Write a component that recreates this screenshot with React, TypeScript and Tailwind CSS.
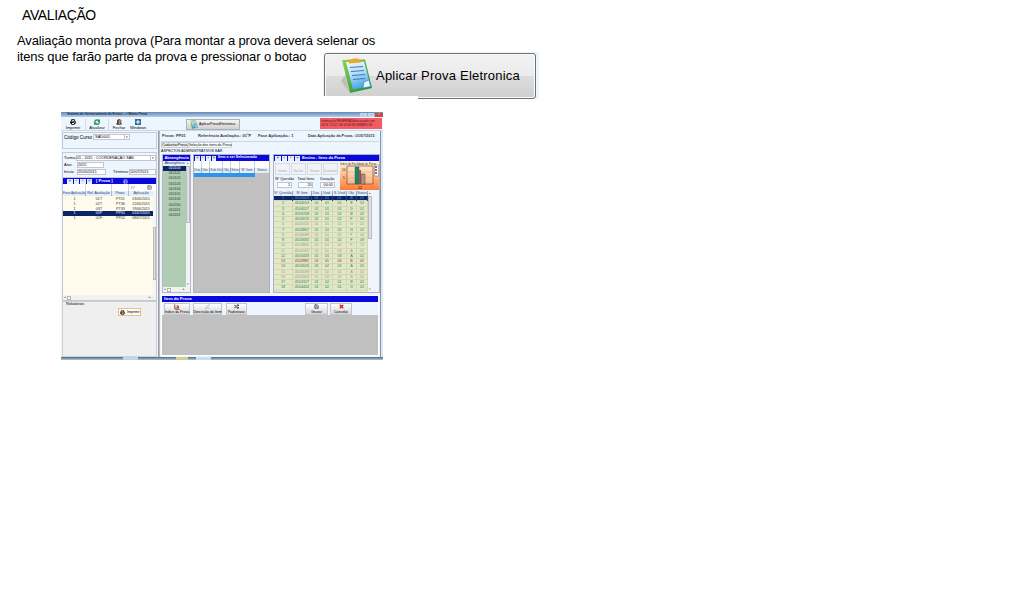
import React from "react";
import { Printer, RefreshCw, DoorOpen, CalendarDays, Plus, X, Save, BarChart3, PenLine, Shuffle } from "lucide-react";

function Clipboard({ className }: { className: string }) {
  return (
    <svg className={className} viewBox="0 0 32 36" fill="none">
      <defs>
        <linearGradient id="page" x1="0" y1="0" x2="0.3" y2="1">
          <stop offset="0" stopColor="#f4fcff" />
          <stop offset="0.5" stopColor="#b4dffa" />
          <stop offset="1" stopColor="#4da6e8" />
        </linearGradient>
        <linearGradient id="board" x1="0" y1="0" x2="1" y2="1">
          <stop offset="0" stopColor="#8fd34d" />
          <stop offset="1" stopColor="#178a3c" />
        </linearGradient>
      </defs>
      <path d="M0 23 4 17 8 34Z" fill="#9ba69c" opacity=".5" />
      <path d="M1 2 24 1.500 31 30 9 35Z" fill="url(#board)" />
      <path d="M5 4 23 3.500 29.500 28 12 31.500Z" fill="url(#page)" />
      <path d="m9 9.500 13-1M10 13.500l13-1M11 17.500l13-1M12 21.500l12-1" stroke="#3f78bd" strokeWidth="1.200" />
      <path d="m22 30 1-6 5-2 1.500 6.500Z" fill="#eefaff" stroke="#358bd2" strokeWidth=".7" />
      <path d="M7 1.500h4l1-1h5l1 1h2v3L8 5.500Z" fill="#e3ab2d" />
    </svg>
  );
}

function NavButtons({ size }: { size: string }) {
  return (
    <div className="flex shrink-0 gap-[1px]">
      {["«", "‹", "›", "»"].map((s) => (
        <span key={s} className={"flex h-[5px] items-center justify-center bg-[#e8edfa] text-[4px] leading-none text-[#34406b] " + size}>{s}</span>
      ))}
    </div>
  );
}

function VScroll({ thumb }: { thumb: string }) {
  return (
    <div className="flex w-[4px] shrink-0 flex-col items-center justify-between bg-[#f3f3f5] text-[3px] leading-[5px] text-[#555]">
      <span>▴</span>
      <div className={"w-[4px] border border-[#bbbcc2] bg-[#dfe0e4] " + thumb} />
      <div className="flex-1" />
      <span>▾</span>
    </div>
  );
}

function HScroll() {
  return (
    <div className="flex h-[5px] shrink-0 items-center bg-[#f1f1f1] px-[1px] text-[3px] leading-none text-[#444]">
      <span>◂</span>
      <div className="ml-[1px] h-[4px] w-[4px] border border-[#b5b5b5] bg-white" />
      <div className="flex-1" />
      <span className="mr-[4px]">▸</span>
    </div>
  );
}

const exams = [
  ["1", "01T", "PT01", "03/06/2015"],
  ["1", "02T", "PT36", "12/06/2015"],
  ["1", "03T", "PT33", "19/06/2015"],
  ["1", "01P", "PP01", "01/07/2015"],
  ["1", "01F", "PP02", "08/07/2015"],
];

function LeftPanel() {
  return (
    <div className="flex w-[98px] shrink-0 flex-col border-r border-[#9a9da8] bg-[#edf6ff] px-[1px]">
      <div className="mt-[1px] flex h-[17px] shrink-0 border border-[#c3ccda] pl-[1px] pt-[1px]">
        <span className="w-[29px] whitespace-nowrap pt-[1px] text-[4.600px] leading-[5px]">Código Curso</span>
        <div className="flex h-[6px] w-[37px] items-center justify-between border border-[#c1c6d1] bg-white pl-[1px] text-[4px]">
          <span>SAD001</span>
          <span className="border-l border-[#c1c6d1] px-[1px] text-[3px]">▾</span>
        </div>
      </div>
      <div className="mt-[3px] flex h-[26px] shrink-0 flex-col border border-[#c3ccda] pl-[1px] pt-[2px] text-[4px] leading-[6px]">
        <div className="flex h-[7px]">
          <span className="w-[12px]">Turma</span>
          <div className="flex h-[6px] w-[80px] items-center justify-between border border-[#c1c6d1] bg-white">
            <span className="whitespace-nowrap text-[3.700px]">01 - 2015 - COORDENAÇÃO SAN</span>
            <span className="border-l border-[#c1c6d1] px-[1px] text-[3px]">▾</span>
          </div>
        </div>
        <div className="flex h-[7px]">
          <span className="w-[13px]">Ano:</span>
          <span className="h-[6px] w-[27px] border border-[#c1c6d1] bg-white text-[3.700px] leading-[4px]">2015</span>
        </div>
        <div className="flex h-[7px]">
          <span className="w-[13px]">Início:</span>
          <span className="h-[6px] w-[29px] border border-[#c1c6d1] bg-white text-[3.700px] leading-[4px]">25/05/2015</span>
          <span className="ml-[7px] w-[16px]">Término:</span>
          <span className="h-[6px] w-[27px] border border-[#c1c6d1] bg-white text-[3.700px] leading-[4px]">10/07/2015</span>
        </div>
      </div>
      <div className="flex h-[123px] shrink-0 flex-col border border-t-0 border-[#c5c7cf] bg-[#fffbed]">
        <div className="flex h-[6px] shrink-0 items-center bg-[#0909df] pl-[4px] text-[4.200px] font-bold leading-none text-white">
          <NavButtons size="w-[5.500px]" />
          <span className="ml-[4px]">[ Prova ]</span>
          <Printer className="ml-[10px] h-[5px] w-[5px]" />
        </div>
        <div className="flex h-[7px] shrink-0 bg-white text-[4px] leading-[7px]">
          <span className="w-[23px] border-r border-[#d3d6dd]" />
          <span className="w-[26px] border-r border-[#d3d6dd]" />
          <span className="w-[17px] border-r border-[#d3d6dd]" />
          <span className="w-[18px] pl-[2px]">/ /</span>
          <CalendarDays className="mt-[1px] h-[5px] w-[5px] text-[#504b62]" />
        </div>
        <div className="flex min-h-0 flex-1">
          <div className="flex flex-1 flex-col">
            <div className="mb-px flex h-[5px] bg-[#e5effb] text-center text-[3.500px] leading-[5px] text-[#223c65]">
              <span className="w-[23px] whitespace-nowrap border-r border-[#a9b9d2] text-[3.300px]">Fase Aplicação</span>
              <span className="w-[26px] border-r border-[#a9b9d2]">Ref. Avaliação</span>
              <span className="w-[17px] border-r border-[#a9b9d2]">Prova</span>
              <span className="w-[24px]">Aplicação</span>
            </div>
            {exams.map((r, i) => (
              <div key={r[1] + r[2]} className={"flex h-[4.800px] text-center text-[3.700px] leading-[4.800px] " + (i === 3 ? "bg-[#0a246a] text-white" : "text-[#333]")}>
                <span className="w-[23px]">{r[0]}</span>
                <span className="w-[26px]">{r[1]}</span>
                <span className="w-[17px]">{r[2]}</span>
                <span className="w-[24px] text-[3.500px]">{r[3]}</span>
              </div>
            ))}
          </div>
          <div className="flex w-[4px] flex-col bg-[#f5f5f7] pt-[36px]">
            <div className="h-[53px] border border-[#b8b8be] bg-[#e1e1e5]" />
          </div>
        </div>
        <HScroll />
      </div>
      <div className="flex flex-1 flex-col border border-[#cfcfcf] bg-[#efefef] text-[4px] leading-[4px]">
        <span className="ml-[3px]">Relatórios</span>
        <div className="ml-[55px] mt-[2px] flex h-[8px] w-[23px] items-center gap-[2px] border border-[#efbd83] bg-[#fffdf9] pl-[1px]">
          <Printer strokeWidth={3} className="h-[5px] w-[5px] shrink-0" />
          <span className="text-[3.500px]">Imprimir</span>
        </div>
      </div>
    </div>
  );
}

const areas = ["010101", "010102", "010103", "010104", "010105", "010106", "010200", "010201", "010202"];

function AreaList() {
  return (
    <div className="flex w-[29px] shrink-0 flex-col border border-[#b5b8bf] bg-[#b0ccb2]">
      <div className="h-[6px] shrink-0 bg-[#0909df] text-center text-[4px] font-bold leading-[6px] text-white">Abrangência</div>
      <div className="flex min-h-0 flex-1">
        <div className="flex-1 text-center text-[3.500px] leading-[5.150px] text-[#24382e]">
          <div className="h-[5px] bg-[#e5effb]">Abrangência</div>
          <div className="h-[5px] bg-[#0a246a] text-white">010100</div>
          {areas.map((a) => <div key={a} className="h-[5.250px]">{a}</div>)}
        </div>
        <VScroll thumb="h-[57px]" />
      </div>
      <HScroll />
    </div>
  );
}

function Candidates() {
  return (
    <div className="flex w-[77px] shrink-0 flex-col border border-[#b0b2b8] bg-[#c0c0c0]">
      <div className="flex h-[6px] shrink-0 items-center gap-[2px] bg-[#0909df] pl-[1px] text-[3.600px] font-bold leading-none text-white">
        <NavButtons size="w-[4.500px]" />
        <span className="whitespace-nowrap">Item a ser Selecionado</span>
      </div>
      <div className="flex h-[7px] shrink-0 bg-white">
        <span className="w-[8px] border-r border-[#ccd0da]" /><span className="w-[8px] border-r border-[#ccd0da]" /><span className="w-[13px] border-r border-[#ccd0da]" /><span className="w-[8px] border-r border-[#ccd0da]" /><span className="w-[9px] border-r border-[#ccd0da]" /><span className="w-[15px] border-r border-[#ccd0da]" />
      </div>
      <div className="flex h-[5px] bg-[#e5effb] text-center text-[3.400px] leading-[5px] text-[#34466d]">
        <span className="w-[8px] border-r border-[#9baac7]">Disc</span>
        <span className="w-[8px] border-r border-[#9baac7]">Uni.</span>
        <span className="w-[13px] whitespace-nowrap border-r border-[#9baac7] text-[3.200px]">Sub Uni</span>
        <span className="w-[8px] border-r border-[#9baac7]">Obj.</span>
        <span className="w-[9px] border-r border-[#9baac7] text-[3.200px]">Série</span>
        <span className="w-[15px] border-r border-[#9baac7]">Nº Item</span>
        <span className="flex-1">Status</span>
      </div>
      <div className="h-[4px] w-[61px] bg-[#2f94ec]" />
    </div>
  );
}

const items: string[][] = [
  ["1", "4503603", "01", "01", "01", "B", "01"],
  ["2", "4504014", "01", "01", "01", "E", "01"],
  ["3", "4504017", "01", "01", "01", "D", "01"],
  ["4", "4503708", "01", "01", "02", "B", "02"],
  ["5", "4503076", "01", "01", "02", "F", "01"],
  ["6", "4503155", "01", "01", "02", "G", "01"],
  ["7", "4503867", "01", "01", "02", "G", "02"],
  ["8", "4503089", "01", "01", "02", "F", "04"],
  ["9", "4503092", "01", "01", "02", "F", "09"],
  ["10", "4503805", "01", "01", "02", "F", "13"],
  ["11", "4503161", "01", "01", "03", "A", "01"],
  ["12", "4503433", "01", "01", "03", "A", "02"],
  ["13", "4503982", "01", "01", "03", "B", "01"],
  ["14", "4503026", "01", "02", "01", "A", "01"],
  ["15", "4503098", "01", "02", "01", "A", "02"],
  ["16", "4503324", "01", "02", "01", "B", "01"],
  ["17", "4503327", "01", "02", "01", "B", "02"],
  ["18", "4504404", "01", "02", "01", "D", "01"],
];

function tone(i: number) {
  if (i === 0) return "bg-[#0a246a] text-[#61a0c5]";
  if (i === 12) return "text-[#9c2d2d]";
  if ([5, 7, 9, 10, 14, 15].includes(i)) return "text-[#999d86]";
  return "text-[#258362]";
}

function Chart() {
  return (
    <svg className="mt-px h-[28px] w-[39px] shrink-0" viewBox="0 0 39 28">
      <defs>
        <linearGradient id="heat" x1="0" y1="0" x2="0" y2="1">
          <stop offset="0" stopColor="#fff5d8" />
          <stop offset="1" stopColor="#ff7b39" />
        </linearGradient>
      </defs>
      <rect width="39" height="28" fill="url(#heat)" />
      <path d="M7 4v18h26V4Z" fill="#fff5dc" fillOpacity=".3" stroke="#754936" strokeWidth=".7" />
      <path d="M7 10h26M7 16h26" stroke="#c6ab94" strokeWidth=".5" />
      <path d="M15 5h4v17h-4Z" fill="#168775" stroke="#304d45" strokeWidth=".4" />
      <path d="M19 8h2v14h-2Z" fill="#bd493b" />
      <path d="M21 12h4v10h-4Z" fill="#a99382" stroke="#5f5347" strokeWidth=".6" />
      <path d="M34.500 3h4v11h-4Z" fill="#fff" stroke="#555" strokeWidth=".4" />
      <path d="M35 5h2M35 8h2M35 11h2" stroke="#733333" strokeWidth="1.500" />
      <text x="0" y="2.800" fontSize="2.700" textLength="36" fill="#35352c">Índice de Facilidade da Prova</text>
      <text x="2" y="9" fontSize="3">10</text>
      <text x="3" y="17" fontSize="3">5</text>
      <text x="18" y="26.500" fontSize="3.500">12</text>
    </svg>
  );
}

const fields = [["Nº Questão", "1"], ["Total Itens", "20"], ["Duração", "00:00"]];

function ExamItems() {
  return (
    <div className="ml-px flex w-[107px] shrink-0 flex-col border border-[#b0b3ba] bg-[#edf6ff]">
      <div className="flex h-[6px] shrink-0 items-center gap-[2px] bg-[#0909df] pl-[1px] text-[3.900px] font-bold leading-none text-white">
        <NavButtons size="w-[5.500px]" />
        <span className="whitespace-nowrap">Ensino - Itens da Prova</span>
      </div>
      <div className="flex h-[29px] shrink-0 justify-between">
        <div className="flex w-[64px] flex-col">
          <div className="mt-[2px] flex h-[12px] gap-[1px] pl-[1px]">
            {["Inserir", "Excluir", "Gravar", "Cancelar"].map((t) => (
              <span key={t} className="flex w-[15px] items-end justify-center border border-[#d6dbe3] bg-[#f0f2f5] text-[3.200px] leading-[5px] text-[#a6aab0]">{t}</span>
            ))}
          </div>
          <div className="mt-[2px] flex justify-around text-[3.700px] leading-[5px]">
            {fields.map(([l, v]) => (
              <div key={l} className="flex w-[19px] flex-col items-center">
                <span className="whitespace-nowrap">{l}</span>
                <span className="h-[6px] w-[15px] border border-[#c1c5d1] bg-white pr-[1px] text-right leading-[4px]">{v}</span>
              </div>
            ))}
          </div>
        </div>
        <Chart />
      </div>
      <div className="flex min-h-0 flex-1 pt-px">
        <div className="w-[94px] bg-[#e2e7c6]">
          <div className="grid h-[5px] grid-cols-[19px_19px_10px_11px_14px_10px_11px] bg-[#e5effb] text-center text-[3.400px] leading-[5px] text-[#30436b]">
            {["Nº Questão", "Nº Item", "Disc.", "Unid.", "S. Unid", "Obj.", "Status"].map((h) => (
              <span key={h} className="whitespace-nowrap border-r border-[#9aa8bf]">{h}</span>
            ))}
          </div>
          {items.map((r, i) => (
            <div key={r[0]} className={"grid h-[5.250px] grid-cols-[19px_19px_10px_11px_14px_10px_11px] border-b border-[#d2d7b7] text-center text-[3.700px] leading-[5.200px] " + tone(i)}>
              {r.map((c, j) => <span key={j} className={"border-r " + (i === 0 ? "border-[#294078]" : "border-[#cfd5b6]")}>{c}</span>)}
            </div>
          ))}
        </div>
        <VScroll thumb="h-[43px]" />
      </div>
    </div>
  );
}

function SmallButton({ icon, label, className }: { icon: React.ReactNode; label: string; className: string }) {
  return (
    <div className={"flex h-[12px] flex-col items-center justify-between border border-[#c2c5ca] bg-linear-to-b from-white to-[#d6d6d6] text-[3.500px] leading-[4px] " + className}>
      {icon}
      <span className="whitespace-nowrap">{label}</span>
    </div>
  );
}

function ItemPanel() {
  return (
    <div className="mt-[2px] flex h-[61px] shrink-0 flex-col border border-white bg-[#c0c0c0]">
      <div className="h-[6px] shrink-0 bg-[#0909df] pl-[2px] text-[4.200px] font-bold leading-[6px] text-white">Item da Prova</div>
      <div className="flex h-[13px] shrink-0 bg-[#edf6ff] pl-[2px] pt-[1px]">
        <SmallButton className="w-[26px]" icon={<BarChart3 strokeWidth={4} className="h-[6px] w-[6px] text-[#a34d38]" />} label="Índice da Prova" />
        <SmallButton className="ml-[3px] w-[29px]" icon={<PenLine className="h-[5px] w-[5px] text-[#78a1a7]" />} label="Descrição do Item" />
        <SmallButton className="ml-[4px] w-[21px]" icon={<Shuffle strokeWidth={3} className="h-[5px] w-[5px]" />} label="Padronizar" />
        <SmallButton className="ml-[58px] w-[23px]" icon={<Save strokeWidth={3} className="h-[5px] w-[5px] text-[#424b66]" />} label="Gravar" />
        <SmallButton className="ml-[2px] w-[22px]" icon={<X strokeWidth={7} className="h-[5px] w-[5px] text-[#ce1d23]" />} label="Cancelar" />
      </div>
    </div>
  );
}

function AppWindow() {
  return (
    <div className="ml-[61px] mt-[13px] flex h-[248px] w-[322px] flex-col overflow-hidden bg-[#edf6ff] text-black">
      <div className="flex h-[5px] shrink-0 items-center justify-between bg-linear-to-b from-[#6489b8] to-[#b4cde8] pl-[2px] text-[3.300px] leading-none">
        <span className="whitespace-nowrap pl-[4px]">Sistema de Gerenciamento do Ensino --&gt; Monta Prova</span>
        <div className="flex h-[4px] gap-[1px] text-[3px]">
          <span className="w-[7px] bg-[#c1d4e9] text-center">-</span><span className="w-[6px] bg-[#c1d4e9] text-center">▫</span><span className="w-[8px] bg-[#c74c3e] text-center text-white">×</span>
        </div>
      </div>
      <div className="flex h-[14px] shrink-0 border-b border-[#cbd7e4] text-[4px] leading-[5px]">
        <div className="flex w-[98px] pt-[2px]">
          <div className="flex w-[25px] flex-col items-center border-r border-[#d3dce6]"><Printer strokeWidth={3} className="h-[6px] w-[6px]" />Imprimir</div>
          <div className="flex w-[23px] flex-col items-center border-r border-[#d3dce6]"><RefreshCw strokeWidth={5} className="h-[6px] w-[6px] text-[#1a984a]" />Atualizar</div>
          <div className="flex w-[20px] flex-col items-center"><DoorOpen strokeWidth={4} className="h-[6px] w-[6px] text-[#563621]" />Fechar</div>
          <div className="flex w-[18px] flex-col items-center"><Plus strokeWidth={4} className="h-[6px] w-[6px] bg-[#236f9e] text-white" />Windows</div>
        </div>
        <div className="ml-[27px] mt-[2px] flex h-[11px] w-[54px] items-center border border-[#a9b1b8] bg-linear-to-b from-[#f4f4f4] to-[#d0d0d0] pl-[3px]">
          <Clipboard className="h-[9px] w-[8px] shrink-0" />
          <span className="ml-[1px] whitespace-nowrap text-[3.600px]">AplicarProvaEletronica</span>
        </div>
        <div className="ml-auto mr-[1px] mt-px h-[11px] w-[62px] bg-[#f35b62] pl-[1px] pt-[1px] text-[3.150px] leading-[4px] tracking-[-0.100px] text-[#64141c]">
          <div className="whitespace-nowrap">Informação RESERVADA de acordo com</div>
          <div className="whitespace-nowrap text-[2.900px]">LEI Nº 12.527, DE 18 DE NOVEMBRO DE</div>
        </div>
      </div>
      <div className="flex min-h-0 flex-1">
        <LeftPanel />
        <div className="flex w-[221px] shrink-0 flex-col border-l border-[#b9bac2] px-[1px]">
          <div className="flex h-[11px] shrink-0 items-center border-b border-[#cfd6e1] pl-[1px] pt-px text-[4.100px] font-bold leading-none text-[#363a42]">
            <span className="w-[36px]">Prova: PP01</span>
            <span className="w-[60px]">Referência Avaliação.: 01ªP</span>
            <span className="w-[50px]">Fase Aplicação.: 1</span>
            <span className="whitespace-nowrap text-[3.800px]">Data Aplicação da Prova.: 01/07/2015</span>
          </div>
          <div className="flex h-[6px] shrink-0 items-end text-[3.700px] leading-[5px]">
            <span className="w-[27px] border border-[#c9cdd3] bg-[#f0f0f0] text-[3.600px] leading-[4px]">CadastrarProva</span>
            <span className="h-[6px] w-[44px] whitespace-nowrap border border-[#d4d6dc] bg-white text-[3.500px] leading-[4px]">Seleção dos itens da Prova</span>
          </div>
          <div className="h-[6px] shrink-0 text-[3.600px] leading-[6px]">ASPECTOS ADMINISTRATIVOS BAR</div>
          <div className="flex h-[139px] shrink-0 gap-[2px] pl-[1px]">
            <AreaList />
            <Candidates />
            <ExamItems />
          </div>
          <ItemPanel />
        </div>
        <div className="flex-1 border-l border-[#8994a7] bg-[#dbe8f6]" />
      </div>
      <div className="flex h-[3px] shrink-0 bg-linear-to-b from-[#53687d] to-[#adc9df]">
        <span className="ml-[62px] w-[15px] bg-[#b9d7ed]" /><span className="ml-[38px] w-[12px] bg-[#d7ce92]" /><span className="ml-[8px] w-[15px] bg-[#c5e0ef]" />
      </div>
    </div>
  );
}

export default function App() {
  return (
    <main className="h-[616px] w-[1024px] overflow-hidden bg-white font-['Liberation_Sans',Arial,sans-serif] text-black">
      <h1 className="h-[33px] pl-[22px] pt-[7px] text-[14px] leading-[17px] tracking-[-0.380px]">AVALIAÇÃO</h1>
      <div className="flex h-[66px]">
        <p className="w-[323px] shrink-0 whitespace-nowrap pl-[17px] text-[13px] leading-[16px] tracking-[-0.120px]">
          Avaliação monta prova (Para montar a prova deverá selenar os<br />itens que farão parte da prova e pressionar o botao
        </p>
        <div className="relative mt-[19px] h-[47px] w-[216px] bg-[#edf5fc] p-[1px]">
          <button className="flex h-[46px] w-[212px] items-center rounded-[3px] border border-[#707070] bg-[linear-gradient(#f2f2f2_0%,#ebebeb_49%,#dddddd_50%,#cfcfcf_100%)] pl-[16px] text-left shadow-[inset_0_0_0_1px_#fafafa]">
            <Clipboard className="h-[36px] w-[32px] shrink-0" />
            <span className="ml-[3px] whitespace-nowrap text-[13px] tracking-[0.220px]">Aplicar Prova Eletronica</span>
          </button>
          <span className="absolute -bottom-px left-0 h-[4px] w-[95px] bg-white" />
        </div>
      </div>
      <AppWindow />
    </main>
  );
}
